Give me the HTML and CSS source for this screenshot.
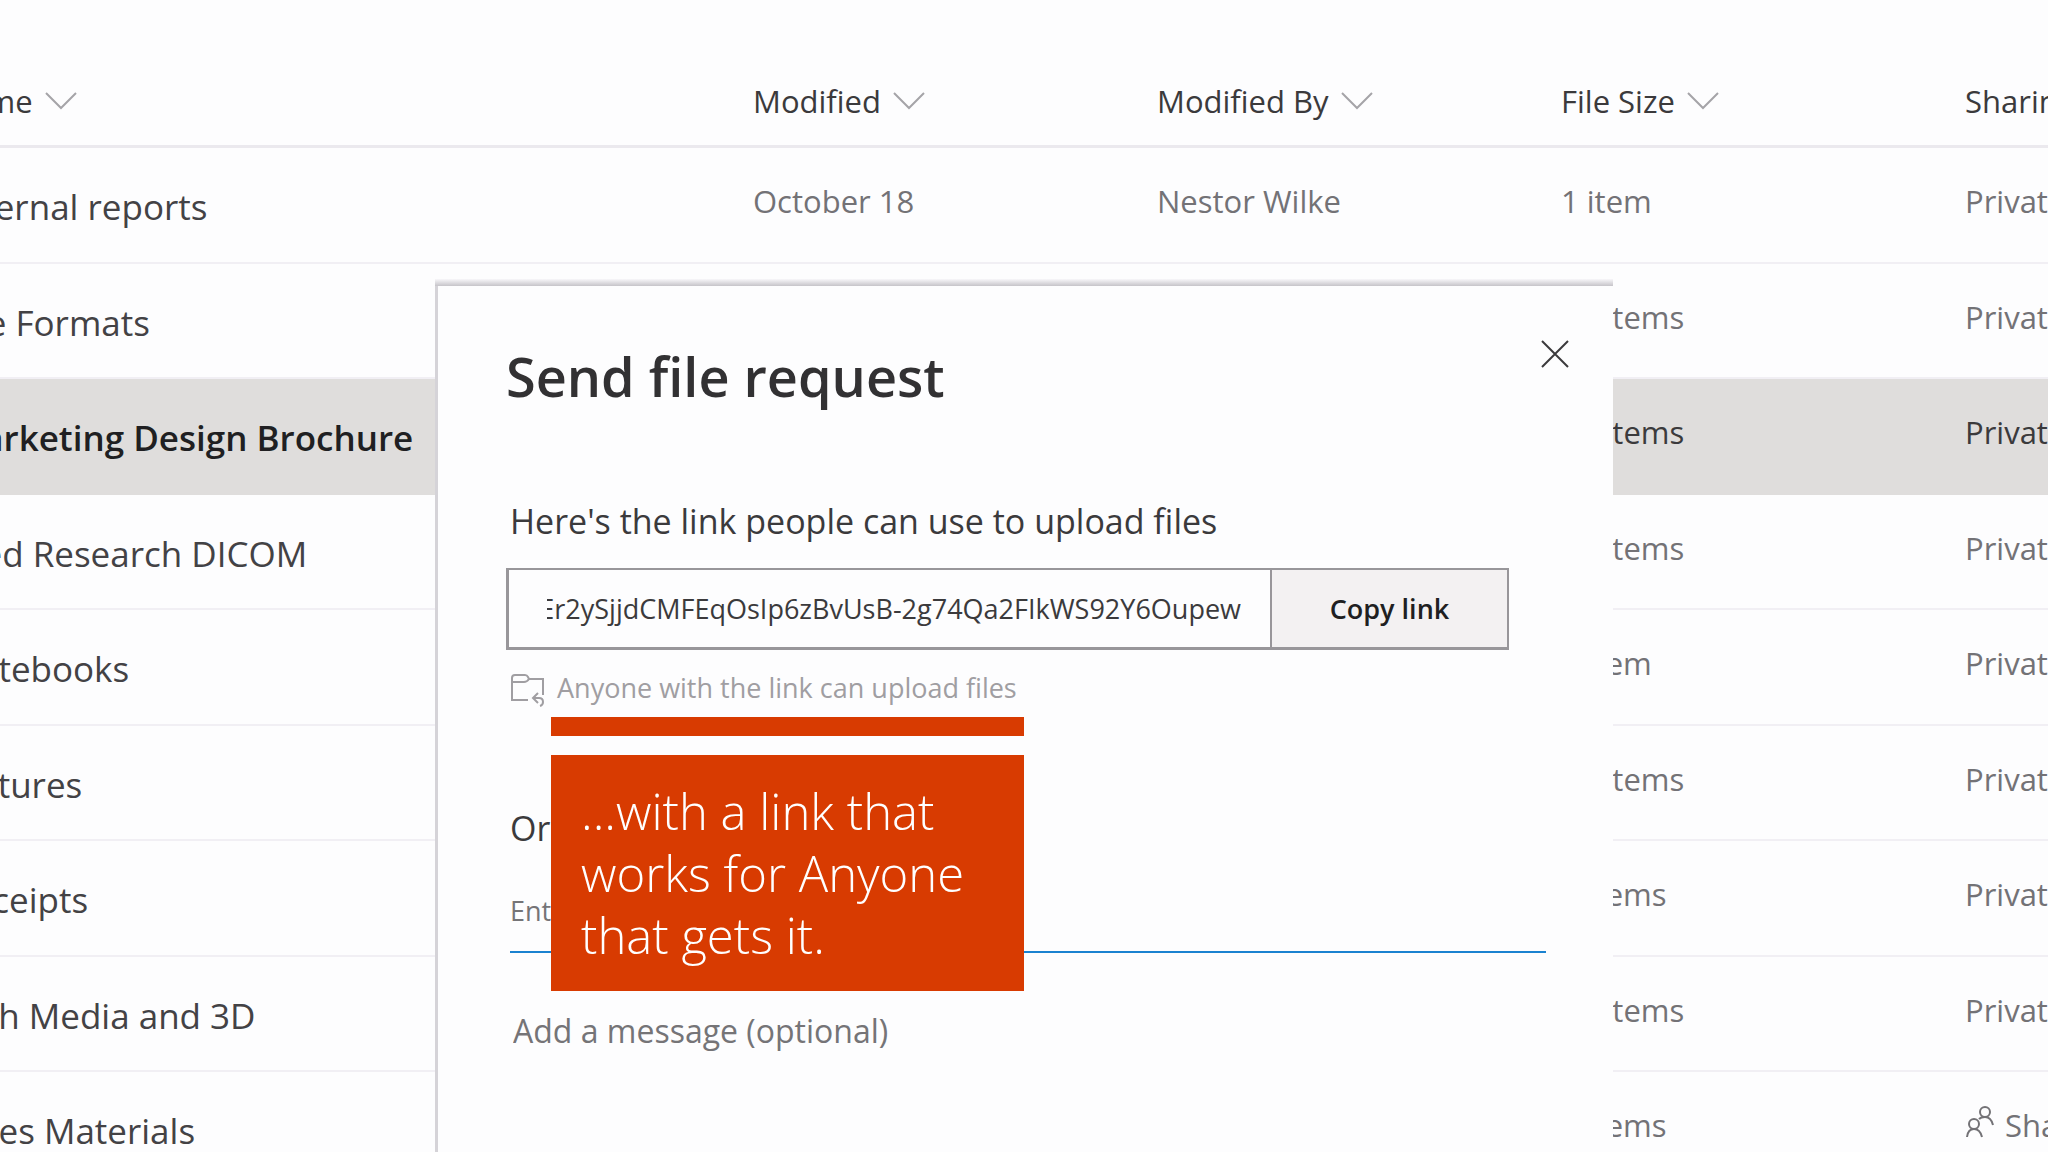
FILE: index.html
```
<!DOCTYPE html>
<html lang="en">
<head>
<meta charset="utf-8">
<meta name="viewport" content="width=device-width, initial-scale=1">
<title>Send file request</title>
<link rel="stylesheet" href="styles.css">
</head>
<body>
<svg class="defs" aria-hidden="true">
  <symbol id="chevron" viewBox="0 0 32 18"><path d="M1 1l15 15L31 1" fill="none" stroke="currentColor" stroke-width="2"/></symbol>
</svg>
<main class="files">
  <table class="file-table">
    <colgroup>
      <col>
      <col class="col-meta">
      <col class="col-meta">
      <col class="col-meta">
      <col class="col-meta">
    </colgroup>
    <thead>
      <tr>
        <th scope="col"><button class="sort">Name<svg class="chevron"><use href="#chevron"/></svg></button></th>
        <th scope="col"><button class="sort">Modified<svg class="chevron"><use href="#chevron"/></svg></button></th>
        <th scope="col"><button class="sort">Modified By<svg class="chevron"><use href="#chevron"/></svg></button></th>
        <th scope="col"><button class="sort">File Size<svg class="chevron"><use href="#chevron"/></svg></button></th>
        <th scope="col"><button class="sort">Sharing</button></th>
      </tr>
    </thead>
    <tbody>
      <tr><td class="name">Internal reports</td><td>October 18</td><td>Nestor Wilke</td><td>1 item</td><td>Private</td></tr>
      <tr><td class="name">File Formats</td><td></td><td></td><td>10 items</td><td>Private</td></tr>
      <tr class="selected"><td class="name">Marketing Design Brochure</td><td></td><td></td><td>10 items</td><td>Private</td></tr>
      <tr><td class="name">Med Research DICOM</td><td></td><td></td><td>10 items</td><td>Private</td></tr>
      <tr><td class="name">Notebooks</td><td></td><td></td><td>1 item</td><td>Private</td></tr>
      <tr><td class="name">Pictures</td><td></td><td></td><td>10 items</td><td>Private</td></tr>
      <tr><td class="name">Receipts</td><td></td><td></td><td>3 items</td><td>Private</td></tr>
      <tr><td class="name">Rich Media and 3D</td><td></td><td></td><td>10 items</td><td>Private</td></tr>
      <tr><td class="name">Sales Materials</td><td></td><td></td><td>3 items</td><td><span class="shared"><svg class="people" viewBox="0 0 30 34" aria-hidden="true"><g fill="none" stroke="currentColor" stroke-width="2"><circle cx="20" cy="8" r="5"/><path d="M14 15q2-2 6-2 6 0 8 8"/><circle cx="9" cy="20" r="5"/><path d="M2 33q1-8 7-8t8 8"/></g></svg>Shared</span></td></tr>
    </tbody>
  </table>
</main>

<section class="dialog" role="dialog" aria-labelledby="dialog-title">
  <button class="close" aria-label="Close"><svg viewBox="0 0 28 28"><path d="M1 1l26 26M27 1L1 27" fill="none" stroke="currentColor" stroke-width="2"/></svg></button>
  <h1 class="title" id="dialog-title">Send file request</h1>
  <label class="label" for="link">Here's the link people can use to upload files</label>
  <div class="link-row">
    <input class="link" id="link" type="text" dir="rtl" readonly value="Er2ySjjdCMFEqOsIp6zBvUsB-2g74Qa2FIkWS92Y6Oupew">
    <button class="copy">Copy link</button>
  </div>
  <p class="hint">
    <svg class="folder" viewBox="0 0 36 34" aria-hidden="true"><g fill="none" stroke="currentColor" stroke-width="2"><path d="M18 27H2V5q0-3 3-3h10q2 0 3 2l1 2h14v16"/><path d="M2 9h12q3 0 5-3"/><path d="M28 20l-5 5 5 5M23 25h6q4 0 4 4 0 3-3 4"/></g></svg>
    Anyone with the link can upload files
  </p>
  <label class="label label-send" for="recipient">Or</label>
  <input class="recipient" id="recipient" type="text" placeholder="Enter">
  <textarea class="message" aria-label="Message" rows="1" placeholder="Add a message (optional)"></textarea>
</section>

<aside class="callout">
  <div class="callout-bar"></div>
  <p class="callout-text">...with a link that works for Anyone that gets it.</p>
</aside>
</body>
</html>
```
FILE: styles.css
```
* {
  box-sizing: border-box;
}

body {
  margin: 0;
  min-height: 100vh;
  position: relative;
  overflow: hidden;
  background: #fdfdfe;
  color: #3b3a3c;
  font-family: "Open Sans", "Noto Sans", sans-serif;
}

button,
input,
textarea {
  margin: 0;
  padding: 0;
  border: 0;
  border-radius: 0;
  background: none;
  color: inherit;
  font: inherit;
  outline: 0;
}

.defs {
  position: absolute;
  width: 0;
  height: 0;
}

/* File list, scrolled sideways under the window edge */
.files {
  height: 100vh;
  overflow: hidden;
}

.file-table {
  width: calc(100% + 375px);
  margin-left: -54px;
  table-layout: fixed;
  border-collapse: separate;
  border-spacing: 0;
  font-size: 31px;
  line-height: 40px;
}

.col-meta {
  width: 404px;
}

.file-table th {
  padding: 81px 0 24px;
  border-bottom: 3px solid #ebe9ee;
  text-align: left;
  font-weight: 400;
}

.sort {
  display: flex;
  align-items: center;
  gap: 12px;
}

.chevron {
  width: 32px;
  height: 18px;
  color: #a5a4a8;
}

.file-table td {
  height: 116px;
  padding: 0 0 8px;
  border-bottom: 2px solid #f1eff4;
  vertical-align: middle;
  white-space: nowrap;
  color: #737276;
}

.file-table tr:nth-child(even) td {
  height: 115px;
}

.file-table .name {
  padding: 4px 0 0 5px;
  color: #434245;
  font-size: 35px;
}

.file-table .selected td {
  background: #dfdddc;
  border-color: #dfdddc;
  color: #3b3a3c;
}

.file-table .selected .name {
  color: #201f22;
  font-weight: 600;
}

.shared {
  display: flex;
  align-items: center;
  gap: 10px;
}

.people {
  width: 30px;
  height: 34px;
  margin-bottom: 8px;
}

/* Dialog */
.dialog {
  position: absolute;
  top: 286px;
  bottom: 0;
  left: 435px;
  width: 1178px;
  padding: 58px 67px 0 68px;
  display: flex;
  flex-direction: column;
  align-items: flex-start;
  border-left: 3px solid #d5d3d8;
  background: #fdfdfe;
}

.dialog::before {
  content: "";
  position: absolute;
  top: -7px;
  left: -3px;
  right: 0;
  height: 7px;
  background: linear-gradient(#f8f7fa, #c6c4c9);
}

.close {
  position: absolute;
  top: 54px;
  right: 44px;
  width: 28px;
  height: 28px;
  color: #3b3a3c;
}

.close svg {
  display: block;
}

.title {
  margin: 0 0 91px;
  color: #323133;
  font-size: 54px;
  font-weight: 600;
  line-height: 64px;
}

.label {
  margin-left: 4px;
  font-size: 34px;
  line-height: 44px;
}

.link-row {
  width: 1003px;
  height: 82px;
  margin-top: 25px;
  display: flex;
  border: 2px solid #98969a;
  border-width: 2px 2px 3px 3px;
}

.link {
  flex: 1;
  min-width: 0;
  padding: 0 29px 0 38px;
  font-size: 27px;
}

.copy {
  width: 237px;
  border-left: 2px solid #98969a;
  background: #f3f1f2;
  color: #201f22;
  font-size: 27px;
  font-weight: 600;
}

.hint {
  margin: 19px 0 0 4px;
  display: flex;
  align-items: center;
  gap: 11px;
  color: #a09ea2;
  font-size: 27px;
  line-height: 36px;
}

.folder {
  width: 36px;
  height: 34px;
  margin-top: 4px;
}

.label-send {
  margin-top: 99px;
}

.recipient {
  align-self: stretch;
  height: 74px;
  margin: 29px 0 0 4px;
  padding-bottom: 10px;
  border-bottom: 2px solid #1b82d0;
  font-size: 27px;
}

.message {
  align-self: stretch;
  height: 44px;
  margin: 56px 0 0 7px;
  overflow: hidden;
  resize: none;
  font-size: 32px;
  line-height: 44px;
}

.recipient::placeholder,
.message::placeholder {
  color: #757477;
  opacity: 1;
}

/* Callout */
.callout {
  position: absolute;
  top: 717px;
  left: 551px;
  width: 473px;
}

.callout-bar {
  height: 19px;
  margin-bottom: 19px;
  background: #d83b01;
}

.callout-text {
  margin: 0;
  padding: 25px 30px;
  background: #d83b01;
  color: #fff;
  font-size: 49px;
  font-weight: 300;
  line-height: 62px;
}
```
